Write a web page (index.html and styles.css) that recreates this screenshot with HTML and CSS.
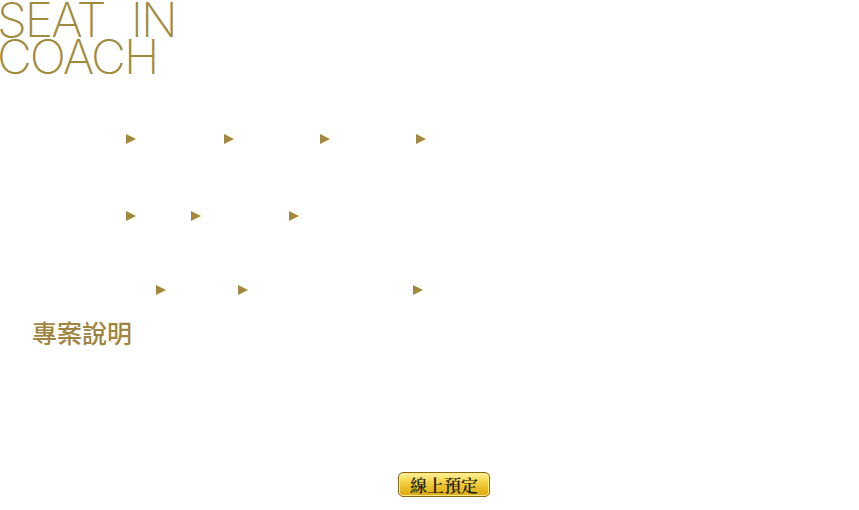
FILE: index.html
```html
<!DOCTYPE html>
<html>
<head>
<meta charset="utf-8">
<link rel="stylesheet" href="styles.css">
</head>
<body>
<div class="page">
  <h1 class="title"><span class="line">SEAT<span class="gap"></span>IN</span><span class="line">COACH</span></h1>
  <div class="row row1">
    <span class="tri t1"></span>
    <span class="tri t2"></span>
    <span class="tri t3"></span>
    <span class="tri t4"></span>
  </div>
  <div class="row row2">
    <span class="tri t1"></span>
    <span class="tri t5"></span>
    <span class="tri t6"></span>
  </div>
  <div class="row row3">
    <span class="tri t7"></span>
    <span class="tri t8"></span>
    <span class="tri t9"></span>
  </div>
  <h2 class="section">專案說明</h2>
  <div class="actions">
    <a class="book-btn" href="#">線上預定</a>
  </div>
</div>
</body>
</html>
```
FILE: styles.css
```css
html, body {
  margin: 0;
  padding: 0;
  background: #fff;
}
.page {
  width: 859px;
  height: 510px;
  overflow: hidden;
}
.title {
  margin: 0;
  padding: 0;
  font-family: Inter, "Liberation Sans", sans-serif;
  font-weight: 250;
  font-size: 48px;
  line-height: 37px;
  letter-spacing: -2px;
  color: #a08a3c;
  display: flex;
  flex-direction: column;
  padding-top: 1px;
  margin-left: -3px;
  height: 77px;
}
.line {
  display: flex;
  align-items: baseline;
  height: 37px;
}
.gap {
  display: inline-block;
  width: 26px;
}
.row {
  display: flex;
  height: 11px;
}
.row1 { margin-top: 56px; }
.row2 { margin-top: 66px; }
.row3 { margin-top: 63px; }
.tri {
  display: block;
  width: 0;
  height: 0;
  border-top: 5.5px solid transparent;
  border-bottom: 5.5px solid transparent;
  border-left: 10px solid #a2883a;
}
.t1 { margin-left: 126px; }
.t2 { margin-left: 88px; }
.t3 { margin-left: 86px; }
.t4 { margin-left: 86px; }
.t5 { margin-left: 55px; }
.t6 { margin-left: 88px; }
.t7 { margin-left: 156px; }
.t8 { margin-left: 72px; }
.t9 { margin-left: 165px; }
.section {
  margin: 21px 0 0 32px;
  font-family: "Noto Sans CJK TC", sans-serif;
  font-weight: 500;
  font-size: 25px;
  line-height: 30px;
  color: #9f8640;
  letter-spacing: 0;
}
.actions {
  display: flex;
  justify-content: flex-start;
  padding-left: 398px;
  margin-top: 125px;
}
.book-btn {
  display: flex;
  align-items: center;
  justify-content: center;
  width: 90px;
  height: 23px;
  border: 1px solid #8a6a10;
  border-radius: 5px;
  background: linear-gradient(#fff2a0 0%, #f7da55 30%, #ecc02a 60%, #dcaa12 100%);
  box-shadow: inset 0 0 0 1px #fbe98a;
  font-family: "Noto Serif CJK TC", "Liberation Serif", serif;
  font-size: 17px;
  font-weight: 600;
  color: #1a1a1a;
  text-decoration: none;
  letter-spacing: 0;
}
```
